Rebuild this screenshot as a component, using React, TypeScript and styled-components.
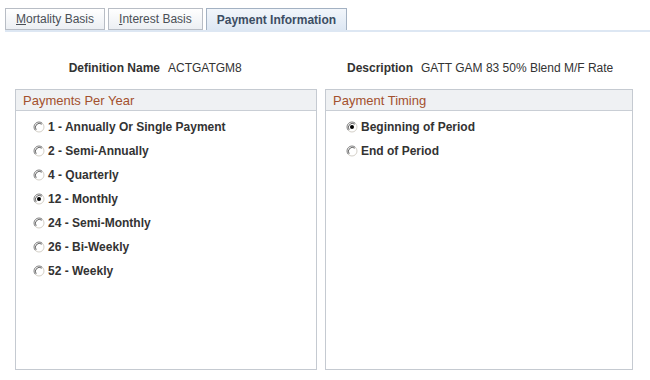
import React, { useState } from 'react';
import styled, { createGlobalStyle } from 'styled-components';

const GlobalStyle = createGlobalStyle`
  body {
    margin: 0;
    background: #ffffff;
    font-family: "Liberation Sans", Arial, sans-serif;
    color: #333333;
  }
`;

const Page = styled.div`
  width: 650px;
  height: 380px;
  overflow: hidden;
  background: #ffffff;
`;

const TabBar = styled.div`
  display: flex;
  gap: 3px;
  padding-top: 8px;
  margin-left: 5px;
  border-bottom: 2px solid #dde7f3;
`;

const Tab = styled.div<{ $active?: boolean }>`
  padding: 0 10px;
  display: flex;
  align-items: center;
  font-size: 12px;
  font-weight: ${p => (p.$active ? 700 : 400)};
  color: ${p => (p.$active ? '#3c4d63' : '#4a4f56')};
  border: 1px solid ${p => (p.$active ? '#a3b1c2' : '#b8bdc5')};
  border-bottom: ${p => (p.$active ? 'none' : '1px solid #b8bdc5')};
  height: ${p => (p.$active ? '21px' : '20px')};
  background: ${p =>
    p.$active
      ? 'linear-gradient(#f2f6fb, #dde7f3)'
      : 'linear-gradient(#ffffff, #eceff3)'};
  cursor: pointer;

  u {
    text-decoration: underline;
  }
`;

const FieldRow = styled.div`
  display: flex;
  margin: 27px 0 0 15px;
  height: 18px;
  align-items: center;
  font-size: 12px;
`;

const Field = styled.div<{ $width: number; $labelWidth: number }>`
  display: grid;
  grid-template-columns: ${p => p.$labelWidth}px auto;
  column-gap: 8px;
  width: ${p => p.$width}px;
`;

const Label = styled.span`
  font-weight: 700;
  text-align: right;
  color: #333333;
`;

const Value = styled.span`
  color: #333333;
`;

const Groups = styled.div`
  display: flex;
  gap: 8px;
  margin: 12px 0 0 15px;
`;

const GroupBox = styled.div<{ $width: number }>`
  width: ${p => p.$width}px;
  height: 279px;
  border: 1px solid #c5cad1;
`;

const GroupHeader = styled.div`
  height: 20px;
  background: #eff1f3;
  border-bottom: 1px solid #c9ced5;
  padding-left: 7px;
  display: flex;
  align-items: center;
  font-size: 13px;
  color: #a3502e;
`;

const RadioList = styled.div<{ $inset: number }>`
  display: flex;
  flex-direction: column;
  padding: 4px 0 0 ${p => p.$inset}px;
`;

const RadioRow = styled.label`
  display: flex;
  align-items: center;
  gap: 3px;
  height: 24px;
  font-size: 12px;
  font-weight: 700;
  color: #333333;
  cursor: pointer;
`;

const Radio = ({ checked }: { checked: boolean }) => (
  <svg width="12" height="12" viewBox="0 0 12 12">
    <circle cx="6" cy="6" r="5" fill="#ffffff" />
    <path d="M2.46 9.54 A5 5 0 0 1 9.54 2.46" fill="none" stroke="#808080" strokeWidth="1" />
    <path d="M9.54 2.46 A5 5 0 0 1 2.46 9.54" fill="none" stroke="#d4d0c8" strokeWidth="1" />
    <path d="M3.2 8.8 A4 4 0 0 1 8.8 3.2" fill="none" stroke="#404040" strokeWidth="0.8" />
    {checked && <circle cx="6" cy="6" r="2" fill="#000000" />}
  </svg>
);

const perYear = [
  '1 - Annually Or Single Payment',
  '2 - Semi-Annually',
  '4 - Quarterly',
  '12 - Monthly',
  '24 - Semi-Monthly',
  '26 - Bi-Weekly',
  '52 - Weekly',
];

const timing = ['Beginning of Period', 'End of Period'];

const App = () => {
  const [freq, setFreq] = useState('12 - Monthly');
  const [time, setTime] = useState('Beginning of Period');

  return (
    <Page>
      <GlobalStyle />
      <TabBar>
        <Tab><span><u>M</u>ortality Basis</span></Tab>
        <Tab><span><u>I</u>nterest Basis</span></Tab>
        <Tab $active>Payment Information</Tab>
      </TabBar>

      <FieldRow>
        <Field $width={310} $labelWidth={145}>
          <Label>Definition Name</Label>
          <Value>ACTGATGM8</Value>
        </Field>
        <Field $width={300} $labelWidth={88}>
          <Label>Description</Label>
          <Value>GATT GAM 83 50% Blend M/F Rate</Value>
        </Field>
      </FieldRow>

      <Groups>
        <GroupBox $width={300}>
          <GroupHeader>Payments Per Year</GroupHeader>
          <RadioList $inset={17}>
            {perYear.map(item => (
              <RadioRow key={item} onClick={() => setFreq(item)}>
                <Radio checked={freq === item} />
                {item}
              </RadioRow>
            ))}
          </RadioList>
        </GroupBox>
        <GroupBox $width={306}>
          <GroupHeader>Payment Timing</GroupHeader>
          <RadioList $inset={20}>
            {timing.map(item => (
              <RadioRow key={item} onClick={() => setTime(item)}>
                <Radio checked={time === item} />
                {item}
              </RadioRow>
            ))}
          </RadioList>
        </GroupBox>
      </Groups>
    </Page>
  );
};

export default App;
